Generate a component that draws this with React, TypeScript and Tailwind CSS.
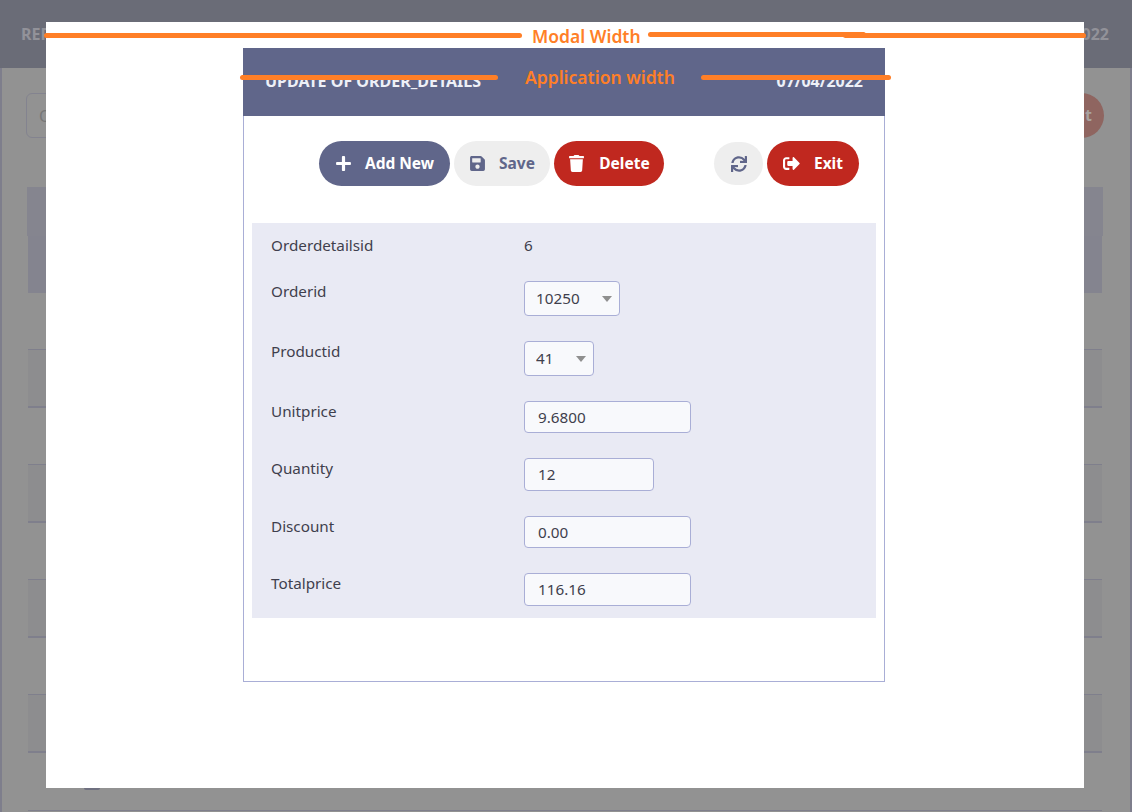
import { FaPlus, FaSave, FaTrash, FaSync, FaSignOutAlt } from 'react-icons/fa';

const font = { fontFamily: '"Noto Sans", sans-serif' };

function PageBehind() {
  return (
    <div className="w-full h-full border-x-2 border-[#7e7e8c] bg-[#929292]">
      <div className="h-[68px] -mx-[2px] bg-[#6a6c77] flex items-center justify-between pl-[21px] pr-[23px] text-[16px] font-bold text-[#929299]">
        <span>REPORT OF ORDER_DETAILS</span>
        <span>07/04/2022</span>
      </div>
      <div className="flex justify-between pl-[24px] pr-[26px] pt-[25px] h-[119px]">
        <div className="w-[300px] h-[45px] border border-[#83838f] rounded-md pl-3 pt-2.5 text-[#777]">Order</div>
        <div className="w-[90px] h-[45px] rounded-full bg-[#8f6560] text-right pr-3 pt-2.5 font-bold text-[#a9a29f]">Exit</div>
      </div>
      <div className="ml-[26px] mr-[28px] h-[106px] bg-[#84848f]">
        <div className="-mx-px h-[49px] bg-[#85858f]" />
      </div>
      <div className="mt-[56px] ml-[26px] mr-[28px] flex flex-col gap-[56px]">
        {[0, 1, 2, 3].map((i) => (
          <div key={i} className="h-[59px] bg-[#8d8d8f] border-t border-b-2 border-[#7f7f8c]" />
        ))}
      </div>
      <div className="mt-[21px] ml-[82px] w-[16px] h-[16px] rounded-[2px] bg-[#6f7080]" />
      <div className="mt-[20px] ml-[26px] mr-[28px] h-px bg-[#7f7f8c]" />
    </div>
  );
}

function ToolButton({ icon, label, cls, gap }: { icon: React.ReactNode; label: string; cls: string; gap: string }) {
  return (
    <button className={`h-[45px] rounded-full flex items-center justify-center text-[15.5px] font-bold ${gap} ${cls}`}>
      {icon}
      <span>{label}</span>
    </button>
  );
}

function Row({ label, height, children, pad }: { label: string; height: string; children: React.ReactNode; pad?: string }) {
  return (
    <div className={`flex pl-[19px] ${height} ${pad ?? ''}`}>
      <label className="w-[253px] text-[15.25px] leading-5 text-[#3f3f4d]">{label}</label>
      {children}
    </div>
  );
}

function Picker({ value, width }: { value: string; width: string }) {
  return (
    <div className={`relative h-[35px] ${width}`}>
      <select
        defaultValue={value}
        className="appearance-none w-full h-full bg-[#f8f9fc] border border-[#a9aed6] rounded-[4px] pl-[11px] text-[15.25px] text-[#3f3f4d]"
      >
        <option>{value}</option>
      </select>
      <div className="absolute right-[8px] top-[15px] w-0 h-0 border-x-[5px] border-x-transparent border-t-[6px] border-t-[#8f8f8f]" />
    </div>
  );
}

function Field({ value, width, height }: { value: string; width: string; height: string }) {
  return (
    <input
      readOnly
      value={value}
      className={`${width} ${height} bg-[#f8f9fc] border border-[#a9aed6] rounded-[4px] pl-[13px] pb-px text-[15.25px] text-[#3f3f4d]`}
    />
  );
}

function AppForm() {
  return (
    <div className="w-[642px] h-[634px] border-x border-b border-[#a9aed6]">
      <div className="-mx-px h-[68px] bg-[#60668a] flex items-center justify-between pl-[22px] pr-[22px] text-[16px] font-bold text-[#eef0f7]">
        <span className="relative top-[-1px]">UPDATE OF ORDER_DETAILS</span>
        <span className="relative top-[-1px]">07/04/2022</span>
      </div>
      <div className="flex items-center pl-[75px] pt-[25px] h-[70px]">
        <ToolButton icon={<FaPlus size={17} />} label="Add New" gap="gap-[13px]" cls="w-[131px] bg-[#60668a] text-white" />
        <ToolButton icon={<FaSave size={17} />} label="Save" gap="gap-[13px]" cls="ml-[4px] w-[96px] bg-[#eeeeee] text-[#60668a]" />
        <ToolButton icon={<FaTrash size={17} />} label="Delete" gap="gap-[14px]" cls="ml-[4px] w-[110px] bg-[#c0281f] text-white" />
        <button className="ml-[50px] w-[49px] h-[43px] rounded-full bg-[#eeeeee] text-[#60668a] flex items-center justify-center">
          <FaSync size={16} />
        </button>
        <ToolButton icon={<FaSignOutAlt size={17} />} label="Exit" gap="gap-[14px]" cls="ml-[4px] w-[92px] bg-[#c0281f] text-white" />
      </div>
      <div className="mt-[37px] ml-[8px] w-[624px] h-[395px] bg-[#e9eaf4]">
        <Row label="Orderdetailsid" height="h-[58px]" pad="pt-[12px]">
          <span className="text-[15.25px] leading-5 text-[#3f3f4d]">6</span>
        </Row>
        <Row label="Orderid" height="h-[60px]">
          <Picker value="10250" width="w-[96px]" />
        </Row>
        <Row label="Productid" height="h-[60px]">
          <Picker value="41" width="w-[70px]" />
        </Row>
        <Row label="Unitprice" height="h-[57px]">
          <Field value="9.6800" width="w-[167px]" height="h-[32px]" />
        </Row>
        <Row label="Quantity" height="h-[58px]">
          <Field value="12" width="w-[130px]" height="h-[33px]" />
        </Row>
        <Row label="Discount" height="h-[57px]">
          <Field value="0.00" width="w-[167px]" height="h-[32px]" />
        </Row>
        <Row label="Totalprice" height="h-[45px]">
          <Field value="116.16" width="w-[167px]" height="h-[33px]" />
        </Row>
      </div>
    </div>
  );
}

export default function App() {
  return (
    <div className="relative w-[1132px] h-[812px] overflow-hidden" style={font}>
      <PageBehind />

      <div className="absolute left-[46px] top-[22px] w-[1038px] h-[766px] bg-white pt-[26px] pl-[197px]">
        <AppForm />
      </div>

      {/* annotations drawn on top of the screenshot */}
      <div className="absolute left-[44px] top-[33px] w-[478px] h-[5px] rounded-full bg-[#ff7f27]" />
      <div className="absolute left-[648px] top-[32px] w-[218px] h-[5px] rounded-full bg-[#ff7f27]" />
      <div className="absolute left-[843px] top-[33px] w-[243px] h-[5px] rounded-full bg-[#ff7f27]" />
      <span className="absolute left-[532px] top-[24px] text-[17.5px] leading-[24px] font-semibold text-[#ff7f27]">Modal Width</span>
      <div className="absolute left-[240px] top-[75px] w-[258px] h-[5px] rounded-full bg-[#ff7f27]" />
      <div className="absolute left-[701px] top-[75px] w-[190px] h-[5px] rounded-full bg-[#ff7f27]" />
      <span className="absolute left-[525px] top-[65px] text-[17.5px] leading-[24px] font-semibold text-[#ff7f27]">Application width</span>
    </div>
  );
}
